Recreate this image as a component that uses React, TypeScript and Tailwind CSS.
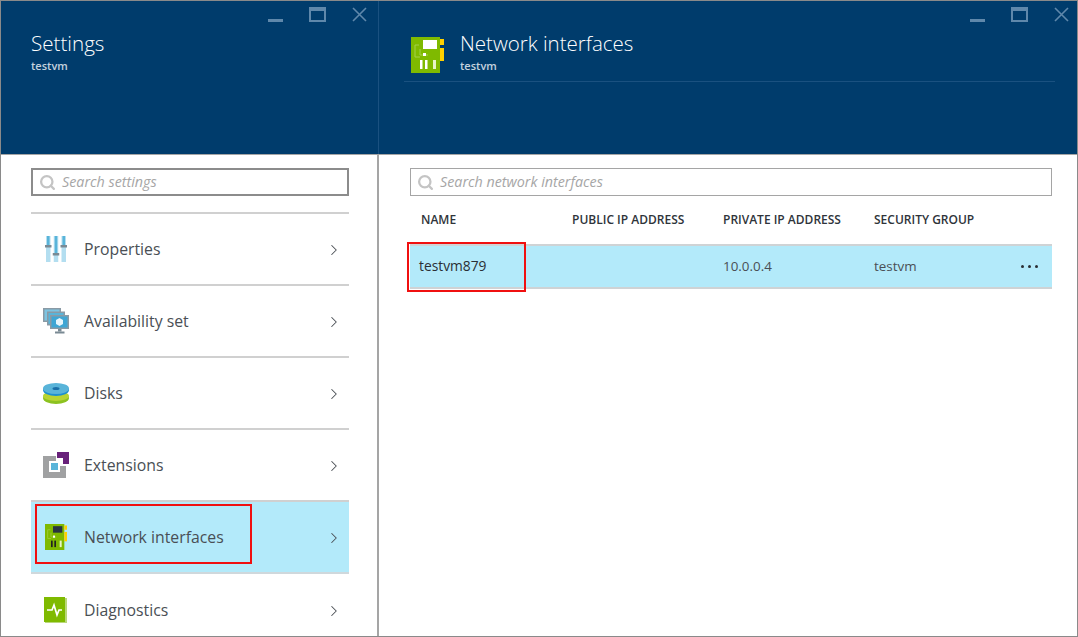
import { ChevronRight, Search } from "lucide-react";
import type { ReactNode } from "react";

const font = "font-['Open_Sans','Noto_Sans',sans-serif]";

const WindowButtons = ({ className }: { className: string }) => (
  <div className={`absolute top-[6px] flex items-start gap-[24px] ${className}`}>
    <svg width="15" height="15" viewBox="0 0 15 15" className="mr-[2px]">
      <rect x="0" y="12" width="15" height="3" fill="#5f88ab" />
    </svg>
    <svg width="17" height="15" viewBox="0 0 17 15">
      <rect x="1" y="1" width="15" height="13" fill="none" stroke="#5f88ab" strokeWidth="2" />
      <rect x="1" y="1" width="15" height="3" fill="#5f88ab" />
    </svg>
    <svg width="15" height="15" viewBox="0 0 15 15" className="ml-[2px]">
      <path d="M1 1 L14 14 M14 1 L1 14" stroke="#5f88ab" strokeWidth="1.6" />
    </svg>
  </div>
);

const NicIcon = ({
  chip = "#ffffff",
  width = 33,
  height = 36,
}: {
  chip?: string;
  width?: number;
  height?: number;
}) => (
  <svg width={width} height={height} viewBox="0 0 33 36" preserveAspectRatio="none">
    <rect x="0" y="0" width="29" height="36" fill="#7fba00" />
    <rect x="29" y="2" width="4" height="6" fill="#ffd000" />
    <rect x="29" y="11" width="4" height="13" fill="#ffd000" />
    <path d="M8 8 H4 V20 H9 M9 12 V18 H17" stroke="#a5d14a" fill="none" strokeWidth="1" />
    <rect x="12" y="3" width="14" height="9" fill={chip} />
    <rect x="12" y="16" width="3" height="3" fill="#fff" />
    <rect x="9" y="23" width="2.5" height="9" fill={chip === "#ffffff" ? "#fff" : "#222"} />
    <rect x="14" y="23" width="2.5" height="9" fill={chip === "#ffffff" ? "#fff" : "#222"} />
    <rect x="22" y="23" width="3" height="9" fill="#e8f4c8" />
  </svg>
);

const PropertiesIcon = () => (
  <svg width="22" height="26" viewBox="0 0 22 26">
    <rect x="1" y="0" width="4.5" height="26" fill="#b3def0" />
    <rect x="8.75" y="0" width="4.5" height="26" fill="#b3def0" />
    <rect x="16.5" y="0" width="4.5" height="26" fill="#b3def0" />
    <rect x="2" y="0" width="2.5" height="9" fill="#59b4d9" />
    <rect x="9.75" y="0" width="2.5" height="17" fill="#59b4d9" />
    <rect x="17.5" y="0" width="2.5" height="9" fill="#59b4d9" />
    <rect x="0" y="9" width="6.5" height="2.5" fill="#7a8a94" />
    <rect x="7.75" y="17" width="6.5" height="2.5" fill="#7a8a94" />
    <rect x="15.5" y="9" width="6.5" height="2.5" fill="#7a8a94" />
  </svg>
);

const AvailabilityIcon = () => (
  <svg width="26" height="26" viewBox="0 0 26 26">
    <rect x="0" y="0" width="18" height="14" fill="#8a9aa5" />
    <rect x="1.5" y="1.5" width="15" height="11" fill="#7cc4e2" />
    <rect x="4" y="3.5" width="18" height="14" fill="#8a9aa5" />
    <rect x="5.5" y="5" width="15" height="11" fill="#59b4d9" />
    <rect x="7" y="7" width="19" height="14" fill="#8a9aa5" />
    <rect x="8.5" y="8.5" width="16" height="11" fill="#3fa6d4" />
    <path d="M16.5 10 L20 12 V16 L16.5 18 L13 16 V12 Z" fill="#e8f6fc" />
    <rect x="15" y="21" width="3.5" height="2.5" fill="#7a8a94" />
    <rect x="12" y="23.5" width="9.5" height="2" fill="#7a8a94" />
  </svg>
);

const DisksIcon = () => (
  <svg width="26" height="21" viewBox="0 0 26 21">
    <ellipse cx="13" cy="15" rx="13" ry="6" fill="#8cc220" />
    <ellipse cx="13" cy="13" rx="13" ry="5" fill="#b8d432" />
    <ellipse cx="13" cy="7" rx="13" ry="6" fill="#1e8fd0" />
    <ellipse cx="13" cy="5.5" rx="13" ry="5.5" fill="#59b4d9" />
    <ellipse cx="13" cy="5.5" rx="3.5" ry="1.6" fill="#1a6fa8" />
  </svg>
);

const ExtensionsIcon = () => (
  <svg width="26" height="26" viewBox="0 0 26 26">
    <path d="M0 4 H13 V9 H6 V20 H17 V14 H23 V26 H0 Z" fill="#a0a1a2" />
    <rect x="8" y="11" width="7" height="7" fill="#59b4d9" />
    <path d="M14 0 H26 V12 H20 V6 H14 Z" fill="#68217a" />
  </svg>
);

const DiagnosticsIcon = () => (
  <svg width="23" height="26" viewBox="0 0 23 26">
    <rect x="1" y="1" width="22" height="25" fill="#b9d77a" />
    <rect x="0" y="0" width="21" height="25" fill="#7fba00" />
    <path d="M3 13 H8 L10 8 L13 18 L15 13 H18" stroke="#fff" strokeWidth="1.7" fill="none" />
  </svg>
);

const rows: { label: string; icon: ReactNode; selected?: boolean }[] = [
  { label: "Properties", icon: <div className="ml-[2px]"><PropertiesIcon /></div> },
  { label: "Availability set", icon: <AvailabilityIcon /> },
  { label: "Disks", icon: <DisksIcon /> },
  { label: "Extensions", icon: <ExtensionsIcon /> },
  {
    label: "Network interfaces",
    icon: <div className="ml-[2px]"><NicIcon chip="#2a3440" width={22} height={26} /></div>,
    selected: true,
  },
  { label: "Diagnostics", icon: <div className="ml-[1px]"><DiagnosticsIcon /></div> },
];

const SearchBox = ({ text, dark }: { text: string; dark?: boolean }) => (
  <div
    className={`flex h-[28px] items-center bg-white pl-[6px] ${
      dark ? "border-2 border-[#8c8c8c]" : "border border-[#a5a5a5]"
    }`}
  >
    <Search size={17} strokeWidth={3.2} className="text-[#c4c4c4]" />
    <span className="ml-[6px] text-[14.3px] italic text-[#a6a6a6]">{text}</span>
  </div>
);

const App = () => {
  return (
    <div
      className={`${font} relative flex h-[637px] w-[1078px] overflow-hidden border border-[#8a8a8a] bg-white`}
    >
      {/* Settings blade */}
      <div className="flex w-[378px] shrink-0 flex-col">
        <header className="relative h-[153px] shrink-0 border-r border-[#1a5180] bg-[#003c6c] pl-[30px] pt-[29px]">
          <WindowButtons className="right-[11px]" />
          <h1 className="-mt-[1px] mb-[1px] text-[20.6px] font-light leading-[28px] text-white">Settings</h1>
          <p className="text-[11px] font-semibold leading-[16px] text-[#c4d2de]">testvm</p>
        </header>
        <div className="flex-1 border-r-2 border-t border-[#a5a5a5] pl-[30px] pr-[28px] pt-[13px]">
          <SearchBox text="Search settings" dark />
          <div className="mt-[16px] border-b-2 border-[#d0d0d0]" />
          {rows.map((row) => (
            <div
              key={row.label}
              className={`flex h-[72px] items-center border-b-2 pl-[12px] pr-[6px] ${
                row.selected ? "border-[#cfd8dc] bg-[#b3eafa]" : "border-[#d0d0d0]"
              } last:border-b-0`}
            >
              <div className="flex w-[41px] justify-start">{row.icon}</div>
              <span className="flex-1 pt-[2px] text-[15.8px] text-[#4a4f55]">{row.label}</span>
              <ChevronRight size={18} strokeWidth={1.4} className="mt-[2px] text-[#4a4f55]" />
            </div>
          ))}
        </div>
      </div>

      {/* Network interfaces blade */}
      <div className="flex min-w-0 flex-1 flex-col">
        <header className="relative h-[153px] shrink-0 bg-[#003c6c] pl-[25px] pr-[22px] pt-[29px]">
          <WindowButtons className="right-[8px]" />
          <div className="flex border-b border-[#1a5180] pb-[7px]">
            <div className="ml-[7px] mr-[16px] mt-[7px]">
              <NicIcon />
            </div>
            <div>
              <h1 className="-mt-[1px] mb-[1px] text-[20.5px] font-light leading-[28px] text-white">Network interfaces</h1>
              <p className="text-[11px] font-semibold leading-[16px] text-[#c4d2de]">testvm</p>
            </div>
          </div>
        </header>
        <div className="border-t border-[#a5a5a5] pl-[31px] pr-[25px] pt-[13px]">
          <SearchBox text="Search network interfaces" />
          <div className="mt-[9px] grid h-[30px] grid-cols-[151px_151px_151px_1fr] items-center pl-[11px] text-[12px] font-semibold text-[#2f343a]">
            <span>NAME</span>
            <span>PUBLIC IP ADDRESS</span>
            <span>PRIVATE IP ADDRESS</span>
            <span>SECURITY GROUP</span>
          </div>
          <div className="mt-[9px] grid h-[45px] grid-cols-[150px_151px_151px_1fr] items-center border-y-2 border-[#cfd3d5] bg-[#b3eafa] pl-[9px] text-[13.4px] text-[#4a4f55]">
            <span className="text-[13.8px] font-medium text-[#2a2f34]">testvm879</span>
            <span />
            <span className="pl-[3px]">10.0.0.4</span>
            <span className="flex items-center justify-between pl-[3px] pr-[14px]">
              testvm
              <span className="flex gap-[4px]">
                <i className="block h-[3px] w-[3px] rounded-full bg-[#2a2f34]" />
                <i className="block h-[3px] w-[3px] rounded-full bg-[#2a2f34]" />
                <i className="block h-[3px] w-[3px] rounded-full bg-[#2a2f34]" />
              </span>
            </span>
          </div>
        </div>
      </div>

      {/* Red callouts drawn on top of the screenshot */}
      <div className="absolute left-[34px] top-[503px] h-[60px] w-[217px] border-2 border-[#f01010]" />
      <div className="absolute left-[406px] top-[241px] h-[50px] w-[119px] border-2 border-[#f01010]" />
    </div>
  );
};

export default App;
